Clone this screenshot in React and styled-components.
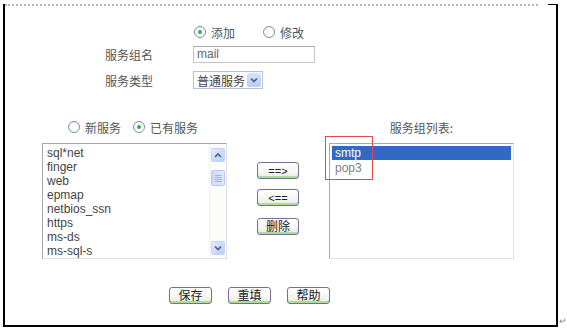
import React from "react";
import styled, { createGlobalStyle } from "styled-components";

const GlobalStyle = createGlobalStyle`
  body {
    margin: 0;
    background: #fff;
    font-family: "Liberation Sans", "Noto Sans CJK SC", sans-serif;
    font-size: 12px;
    color: #333;
  }
`;

const Page = styled.div`
  display: flex;
  align-items: flex-end;
  padding: 4px 0 0 3px;
`;

const Frame = styled.div`
  box-sizing: border-box;
  width: 559px;
  height: 323px;
  border: 2px solid #000;
  border-top: none;
  position: relative;
`;

const TopRule = styled.div`
  display: flex;
  height: 2px;
`;

const Dotted = styled.div`
  width: 533px;
  border-top: 2px dotted #a7bca0;
`;

const Corner = styled.div`
  margin-left: auto;
  width: 8px;
  border-top: 1px solid #000;
`;

const ReturnMark = styled.span`
  font-size: 9px;
  line-height: 9px;
  color: #888;
  margin: 0 0 1px 1px;
`;

const Cjk = styled.span`
  font-family: "Noto Sans CJK SC", sans-serif;
  font-size: 12px;
  color: ${(p) => p.$color || "#555"};
`;

// ---- top form ----
const FormBlock = styled.div`
  padding: 15px 0 0 100px;
`;

const FormRow = styled.div`
  display: grid;
  grid-template-columns: 88px auto;
  align-items: center;
  height: ${(p) => p.$h}px;
  margin-top: ${(p) => p.$mt || 0}px;
`;

const RadioGroup = styled.div`
  display: flex;
  align-items: center;
  gap: ${(p) => p.$gap}px;
  padding-left: ${(p) => p.$pl || 0}px;
`;

const RadioItem = styled.label`
  display: flex;
  align-items: center;
  gap: 5px;
`;

const RadioDot = styled.span`
  box-sizing: border-box;
  width: 12px;
  height: 12px;
  border-radius: 50%;
  border: 1px solid #7891b0;
  background: radial-gradient(circle at 60% 60%, #fff 40%, #e4e8ee 100%);
  display: flex;
  align-items: center;
  justify-content: center;

  &::after {
    content: "";
    width: 4px;
    height: 4px;
    border-radius: 50%;
    background: ${(p) => (p.$on ? "#3aae3a" : "transparent")};
  }
`;

const TextInput = styled.div`
  box-sizing: border-box;
  width: 122px;
  height: 17px;
  border: 1px solid #c3c6c9;
  border-top-color: #a9adb1;
  padding-left: 3px;
  line-height: 15px;
  color: #666;
  font-size: 12px;
`;

const Select = styled.div`
  box-sizing: border-box;
  width: 70px;
  height: 18px;
  border: 1px solid #b4c2d2;
  display: flex;
  align-items: center;
  padding-left: 3px;
  justify-content: space-between;
`;

const DropBtn = styled.span`
  width: 14px;
  height: 14px;
  margin-right: 1px;
  background: linear-gradient(#d8e4fb, #b7cbf3);
  border-radius: 2px;
  display: flex;
  align-items: center;
  justify-content: center;
`;

// ---- middle ----
const Middle = styled.div`
  display: grid;
  grid-template-columns: 185px 42px 185px;
  grid-template-rows: 16px 116px;
  column-gap: 30px;
  row-gap: 8px;
  margin-top: 30px;
  padding-left: 37px;
`;

const Title = styled.div`
  display: flex;
  align-items: center;
  justify-content: center;
`;

const ListBox = styled.div`
  box-sizing: border-box;
  position: relative;
  display: flex;
  border: 1px solid;
  border-color: #a8a8a8 #e0e0e0 #e0e0e0 #a8a8a8;
`;

const Items = styled.div`
  flex: 1;
  padding: 2px 2px 0 ${(p) => p.$pl}px;
`;

const Item = styled.div`
  height: 14px;
  line-height: 14px;
  font-size: 12px;
  color: ${(p) => (p.$sel ? "#fff" : p.$muted ? "#808080" : "#444")};
  background: ${(p) => (p.$sel ? "#316ac5" : "transparent")};
  padding-left: ${(p) => p.$pad || 0}px;
`;

const Scrollbar = styled.div`
  width: 16px;
  display: flex;
  flex-direction: column;
  align-items: center;
  padding: 4px 0 3px;
  background: #fcfcfb;
  border-left: 1px solid #f2f2f0;
`;

const ScrollBtn = styled.div`
  box-sizing: border-box;
  width: 14px;
  height: 14px;
  border-radius: 2px;
  border: 1px solid #c3d3fd;
  background: linear-gradient(135deg, #e3ebfe, #b9cdf6);
  display: flex;
  align-items: center;
  justify-content: center;
`;

const Thumb = styled.div`
  box-sizing: border-box;
  width: 14px;
  height: 16px;
  margin-top: 8px;
  border-radius: 2px;
  border: 1px solid #b7c9f3;
  background: linear-gradient(90deg, #cbdafc, #e1e9fe);
  display: flex;
  flex-direction: column;
  align-items: center;
  justify-content: center;
  gap: 1px;
`;

const Grip = styled.span`
  width: 7px;
  height: 1px;
  background: #9db5ea;
`;

const Spacer = styled.div`
  flex: 1;
`;

const Actions = styled.div`
  display: flex;
  flex-direction: column;
  padding-top: 19px;
`;

const Button = styled.button`
  box-sizing: border-box;
  width: ${(p) => p.$w || 42}px;
  height: 17px;
  margin-top: ${(p) => p.$mt || 0}px;
  padding: 0;
  border: 1px solid #756e96;
  border-radius: 3px;
  background: linear-gradient(#ffffff, #f3f3f0 70%, #e8e8e2);
  box-shadow: inset 0 -2px 0 #addc96;
  font-family: "Liberation Sans", "Noto Sans CJK SC", sans-serif;
  font-size: 11px;
  line-height: 14px;
  color: #222;
`;

const Highlight = styled.div`
  position: absolute;
  left: -5px;
  top: -8px;
  width: 46px;
  height: 42px;
  border: 1px solid #e24a4a;
  pointer-events: none;
`;

// ---- bottom ----
const Footer = styled.div`
  display: flex;
  gap: 16px;
  margin-top: 28px;
  padding-left: 164px;
`;

const Chevron = ({ up }) => (
  <svg width="8" height="6" viewBox="0 0 8 6">
    <polyline
      points={up ? "1,5 4,2 7,5" : "1,1.5 4,4.5 7,1.5"}
      fill="none"
      stroke="#4d6185"
      strokeWidth="1.6"
    />
  </svg>
);

const services = ["sql*net", "finger", "web", "epmap", "netbios_ssn", "https", "ms-ds", "ms-sql-s"];

export default function App() {
  return (
    <>
      <GlobalStyle />
      <Page>
        <Frame>
          <TopRule>
            <Dotted />
            <Corner />
          </TopRule>

          <FormBlock>
            <FormRow $h={22}>
              <span />
              <RadioGroup $gap={28} $pl={1}>
                <RadioItem>
                  <RadioDot $on />
                  <Cjk>添加</Cjk>
                </RadioItem>
                <RadioItem>
                  <RadioDot />
                  <Cjk>修改</Cjk>
                </RadioItem>
              </RadioGroup>
            </FormRow>
            <FormRow $h={17} $mt={3}>
              <Cjk>服务组名</Cjk>
              <TextInput>mail</TextInput>
            </FormRow>
            <FormRow $h={18} $mt={8}>
              <Cjk>服务类型</Cjk>
              <Select>
                <Cjk $color="#444">普通服务</Cjk>
                <DropBtn>
                  <Chevron />
                </DropBtn>
              </Select>
            </FormRow>
          </FormBlock>

          <Middle>
            <RadioGroup $gap={12} $pl={26}>
              <RadioItem>
                <RadioDot />
                <Cjk>新服务</Cjk>
              </RadioItem>
              <RadioItem>
                <RadioDot $on />
                <Cjk>已有服务</Cjk>
              </RadioItem>
            </RadioGroup>
            <span />
            <Title>
              <Cjk>服务组列表:</Cjk>
            </Title>

            <ListBox>
              <Items $pl={4}>
                {services.map((s) => (
                  <Item key={s}>{s}</Item>
                ))}
              </Items>
              <Scrollbar>
                <ScrollBtn>
                  <Chevron up />
                </ScrollBtn>
                <Thumb>
                  <Grip />
                  <Grip />
                  <Grip />
                  <Grip />
                </Thumb>
                <Spacer />
                <ScrollBtn>
                  <Chevron />
                </ScrollBtn>
              </Scrollbar>
            </ListBox>

            <Actions>
              <Button>==&gt;</Button>
              <Button $mt={10}>&lt;==</Button>
              <Button $mt={12}>
                <Cjk $color="#222">删除</Cjk>
              </Button>
            </Actions>

            <ListBox>
              <Items $pl={2}>
                <Item $sel $pad={3}>smtp</Item>
                <Item $muted $pad={3} style={{ marginTop: 1 }}>pop3</Item>
              </Items>
              <Highlight />
            </ListBox>
          </Middle>

          <Footer>
            <Button $w={43}>
              <Cjk $color="#222">保存</Cjk>
            </Button>
            <Button $w={43}>
              <Cjk $color="#222">重填</Cjk>
            </Button>
            <Button $w={43}>
              <Cjk $color="#222">帮助</Cjk>
            </Button>
          </Footer>
        </Frame>
        <ReturnMark>↵</ReturnMark>
      </Page>
    </>
  );
}
